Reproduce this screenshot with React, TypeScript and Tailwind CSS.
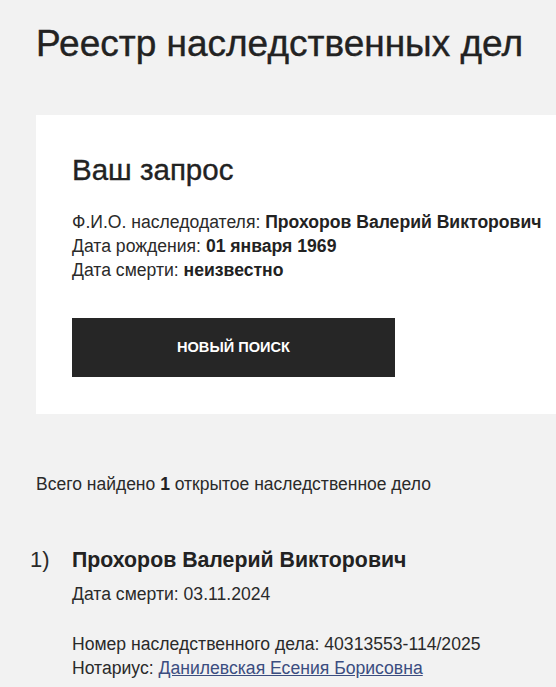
export default function App() {
  return (
    <div className="min-h-[687px] bg-[#f2f2f2] font-['Liberation_Sans',Arial,sans-serif] text-[#222]">
      <div className="pl-[36px] pt-[24px]">
        <h1 className="text-[37px] leading-[40px] [-webkit-text-stroke:0.4px_#222]">Реестр наследственных дел</h1>

        <div className="mt-[51px] bg-white pl-[36px] pt-[38px] pb-[37px]">
          <h2 className="text-[29.5px] leading-[34px] [-webkit-text-stroke:0.35px_#222]">Ваш запрос</h2>
          <div className="mt-[23px] text-[17.6px] leading-[24px] text-[#2a2a2a]">
            <p>
              Ф.И.О. наследодателя: <b className="text-[#222]">Прохоров Валерий Викторович</b>
            </p>
            <p>
              Дата рождения: <b className="text-[#222]">01 января 1969</b>
            </p>
            <p>
              Дата смерти: <b className="text-[#222]">неизвестно</b>
            </p>
          </div>
          <button
            type="button"
            className="mt-[36px] h-[59px] w-[323px] bg-[#262626] text-[14.6px] font-bold uppercase text-white"
          >
            Новый поиск
          </button>
        </div>

        <p className="mt-[58px] text-[17.5px] leading-[24px] text-[#2a2a2a]">
          Всего найдено <b className="text-[#222]">1</b> открытое наследственное дело
        </p>

        <div className="mt-[50px] flex">
          <span className="-ml-[6px] w-[42px] shrink-0 text-[22px] leading-[28px] text-[#2a2a2a]">1)</span>
          <div>
            <h3 className="text-[21.3px] font-bold leading-[28px]">Прохоров Валерий Викторович</h3>
            <p className="mt-[8px] text-[17.6px] leading-[24px] text-[#2a2a2a]">Дата смерти: 03.11.2024</p>
            <div className="mt-[26px] text-[17.6px] leading-[24px] text-[#2a2a2a]">
              <p>Номер наследственного дела: 40313553-114/2025</p>
              <p>
                Нотариус:{" "}
                <a href="#" className="text-[#3b4d80] underline">
                  Данилевская Есения Борисовна
                </a>
              </p>
            </div>
          </div>
        </div>
      </div>
    </div>
  );
}
